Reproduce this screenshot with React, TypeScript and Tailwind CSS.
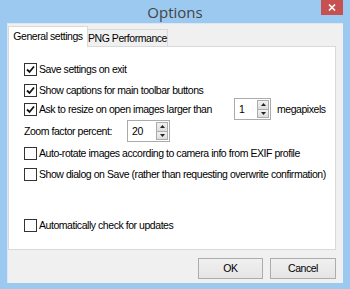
import React from "react";

const font = { fontFamily: '"Liberation Sans", Arial, sans-serif' };
const txt = "text-[10.5px] leading-none text-black whitespace-nowrap tracking-[-0.45px]";

function Check({ checked }: { checked?: boolean }) {
  return (
    <span className="w-[13px] h-[13px] border border-[#333333] bg-white flex items-center justify-center shrink-0">
      {checked && (
        <svg width="9" height="9" viewBox="0 0 9 9">
          <path d="M1 4.5 L3.5 7 L8 1.5" fill="none" stroke="#111" strokeWidth="1.8" />
        </svg>
      )}
    </span>
  );
}

function Row({ checked, label, className = "" }: { checked?: boolean; label: string; className?: string }) {
  return (
    <div className={"flex items-center gap-[2px] h-[13px] " + className}>
      <Check checked={checked} />
      <span className={txt}>{label}</span>
    </div>
  );
}

function Spin({ value, w }: { value: string; w: string }) {
  return (
    <div className={"h-[22px] border border-[#ababab] bg-white flex items-center pl-[4px] pr-[1px] " + w}>
      <span className={"flex-1 " + txt}>{value}</span>
      <div className="flex flex-col w-[12px] h-[18px]">
        <div className="flex-1 border border-[#acacac] bg-gradient-to-b from-[#f2f2f2] to-[#dddddd] flex items-center justify-center">
          <svg width="5" height="3" viewBox="0 0 5 3"><path d="M0 3 L2.5 0 L5 3Z" fill="#222" /></svg>
        </div>
        <div className="flex-1 border border-t-0 border-[#acacac] bg-gradient-to-b from-[#f2f2f2] to-[#dddddd] flex items-center justify-center">
          <svg width="5" height="3" viewBox="0 0 5 3"><path d="M0 0 L2.5 3 L5 0Z" fill="#222" /></svg>
        </div>
      </div>
    </div>
  );
}

export default function App() {
  return (
    <div className="w-[350px] h-[289px] bg-[#9bc9f0] flex flex-col" style={font}>
      <div className="h-[23px] relative flex items-center justify-center shrink-0">
        <span className="text-[15px] text-[#444444] leading-none mt-[1px]" style={{ fontFamily: '"Open Sans", sans-serif' }}>
          Options
        </span>
        <div className="absolute right-[7px] top-0 w-[22px] h-[15px] bg-[#c75050] flex items-center justify-center">
          <svg width="8" height="7" viewBox="0 0 8 7">
            <path d="M1 0.5 L7 6.5 M7 0.5 L1 6.5" stroke="#fff" strokeWidth="1.6" />
          </svg>
        </div>
      </div>
      <div className="mx-[7px] mb-[6px] flex-1 bg-[#f0f0f0] border-t border-l border-[#dbe8f4] flex flex-col">
        <div className="flex items-end h-[21px] mt-[1px]">
          <div className="h-[21px] w-[80px] bg-white border border-b-0 border-[#d9d9d9] flex items-center justify-center relative z-10 -mb-px pb-[2px]">
            <span className={txt}>General settings</span>
          </div>
          <div className="h-[17px] w-[80px] bg-[#f0f0f0] border border-l-0 border-b-0 border-[#d9d9d9] flex items-center justify-center">
            <span className={txt}>PNG Performance</span>
          </div>
        </div>
        <div className="w-[328px] h-[204px] bg-white border border-[#d9d9d9] flex flex-col pl-[15px] pt-[16px]">
          <Row checked label="Save settings on exit" />
          <Row checked label="Show captions for main toolbar buttons" className="mt-[8px]" />
          <div className="flex items-center mt-[1px] h-[22px]">
            <div className="w-[210px]"><Row checked label="Ask to resize on open images larger than" /></div>
            <Spin value="1" w="w-[37px]" />
            <span className={"ml-[6px] " + txt}>megapixels</span>
          </div>
          <div className="flex items-center mt-[0px] h-[22px]">
            <span className={"w-[103px] " + txt}>Zoom factor percent:</span>
            <Spin value="20" w="w-[43px]" />
          </div>
          <Row label="Auto-rotate images according to camera info from EXIF profile" className="mt-[5px]" />
          <Row label="Show dialog on Save (rather than requesting overwrite confirmation)" className="mt-[8px]" />
          <Row label="Automatically check for updates" className="mt-[38px]" />
        </div>
        <div className="flex justify-end gap-[7px] mt-[8px] mr-[7px]">
          <button className={"w-[65px] h-[21px] border border-[#acacac] bg-gradient-to-b from-[#f0f0f0] to-[#e5e5e5] " + txt}>OK</button>
          <button className={"w-[66px] h-[21px] border border-[#acacac] bg-gradient-to-b from-[#f0f0f0] to-[#e5e5e5] " + txt}>Cancel</button>
        </div>
      </div>
    </div>
  );
}
